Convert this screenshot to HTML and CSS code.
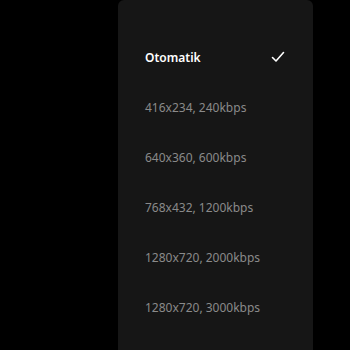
FILE: index.html
```html
<!DOCTYPE html>
<html lang="tr">
<head>
  <meta charset="UTF-8" />
  <title>Kalite</title>
  <link rel="stylesheet" href="styles.css">
</head>
<body>

  <div class="quality-menu">
    <ul>
      <li class="active">
        <span>Otomatik</span>
        <svg class="check" width="14" height="12" viewBox="0 0 14 12">
          <path d="M1.5 6.5 L5 10 L12.5 1.5" fill="none" stroke="#fff" stroke-width="1.6" stroke-linecap="round" stroke-linejoin="round"/>
        </svg>
      </li>
      <li><span>416x234, 240kbps</span></li>
      <li><span>640x360, 600kbps</span></li>
      <li><span>768x432, 1200kbps</span></li>
      <li><span>1280x720, 2000kbps</span></li>
      <li><span>1280x720, 3000kbps</span></li>
    </ul>
  </div>

</body>
</html>
```
FILE: styles.css
```css
body {
  margin: 0;
  background: #000;
  font-family: "Noto Sans", "Open Sans", sans-serif;
  height: 350px;
  overflow: hidden;
}

.quality-menu {
  margin-left: 118px;
  width: 195px;
  height: 350px;
  background: #161616;
  border-radius: 6px 6px 0 0;
  box-sizing: border-box;
  padding: 32px 27px 0 27px;
}

.quality-menu ul {
  list-style: none;
  margin: 0;
  padding: 0;
}

.quality-menu li {
  height: 50px;
  display: flex;
  align-items: center;
  justify-content: space-between;
  font-size: 12px;
  color: #8a8a8a;
}

.quality-menu li.active {
  color: #fff;
  font-weight: 600;
  font-size: 12px;
}

.check {
  margin-right: 1px;
}
```
